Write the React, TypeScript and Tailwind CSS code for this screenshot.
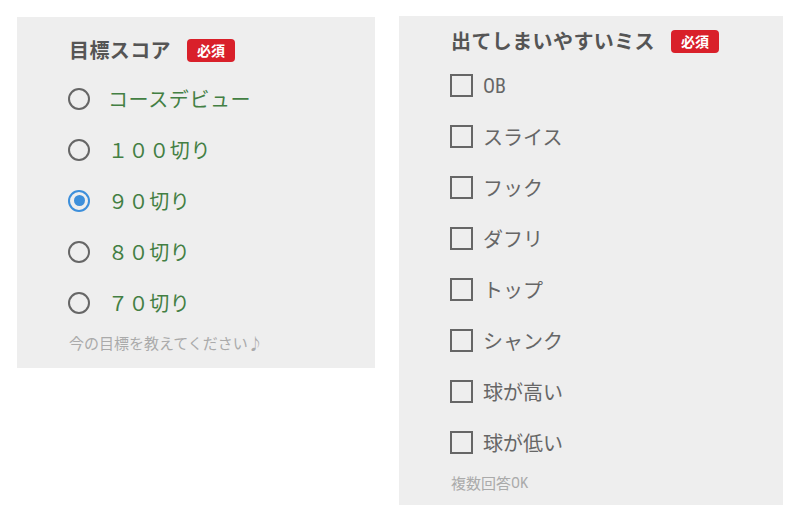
const scores = ["コースデビュー", "１００切り", "９０切り", "８０切り", "７０切り"];
const misses = ["OB", "スライス", "フック", "ダフリ", "トップ", "シャンク", "球が高い", "球が低い"];

const narrow = '"Liberation Sans Narrow", "Roboto Condensed", "DejaVu Sans Condensed", "Noto Sans CJK JP", sans-serif';

function Badge() {
  return (
    <span className="ml-4 inline-flex h-[23px] w-[48px] items-center justify-center rounded-[4px] bg-[#d9202a] text-[14px] font-bold leading-none text-white">
      必須
    </span>
  );
}

function Radio({ checked }: { checked: boolean }) {
  if (checked) {
    return (
      <span className="flex h-[22px] w-[22px] shrink-0 items-center justify-center rounded-full border-[2.5px] border-[#3d8fdb]">
        <span className="h-[11px] w-[11px] rounded-full bg-[#3d8fdb]" />
      </span>
    );
  }
  return <span className="h-[22px] w-[22px] shrink-0 rounded-full border-[2.5px] border-[#666]" />;
}

export default function App() {
  return (
    <div
      className="flex h-[523px] w-[799px] items-start gap-[24px] bg-white pl-[17px]"
      style={{ fontFamily: '"Noto Sans CJK JP", "Noto Sans", sans-serif' }}
    >
      <section className="mt-[17px] flex w-[358px] flex-col bg-[#eeeeee] pb-[10px] pl-[51px] pt-[15px]">
        <div className="flex h-[36px] items-center pl-[1px]">
          <h2 className="text-[20px] font-bold tracking-[0.02em] text-[#555]">目標スコア</h2>
          <Badge />
        </div>
        <div className="mt-[5px] flex flex-col">
          {scores.map((s, i) => (
            <label key={s} className="flex h-[51px] items-center gap-[18px]">
              <Radio checked={i === 2} />
              <span className="text-[20px] tracking-[0.03em] text-[#437f43]">{s}</span>
            </label>
          ))}
        </div>
        <p className="flex h-[30px] items-center pl-[1px] text-[15px] text-[#aaa]">今の目標を教えてください♪</p>
      </section>

      <section className="mt-[16px] flex w-[384px] flex-col bg-[#eeeeee] pb-[7px] pl-[52px] pt-[7px]">
        <div className="flex h-[36px] items-center">
          <h2 className="text-[20px] font-bold tracking-[0.02em] text-[#555]">出てしまいやすいミス</h2>
          <Badge />
        </div>
        <div className="mt-[1px] flex flex-col">
          {misses.map((m) => (
            <label key={m} className="flex h-[51px] items-center gap-[10px]">
              <span className="-ml-[1px] h-[23px] w-[23px] shrink-0 border-[2.5px] border-[#666]" />
              {m === "OB" ? (
                <span className="text-[20px] text-[#666]" style={{ fontFamily: narrow }}>
                  OB
                </span>
              ) : (
                <span className="text-[20px] text-[#666]">{m}</span>
              )}
            </label>
          ))}
        </div>
        <p className="flex h-[30px] items-center text-[15px] text-[#aaa]">
          複数回答<span style={{ fontFamily: narrow }}>OK</span>
        </p>
      </section>
    </div>
  );
}
